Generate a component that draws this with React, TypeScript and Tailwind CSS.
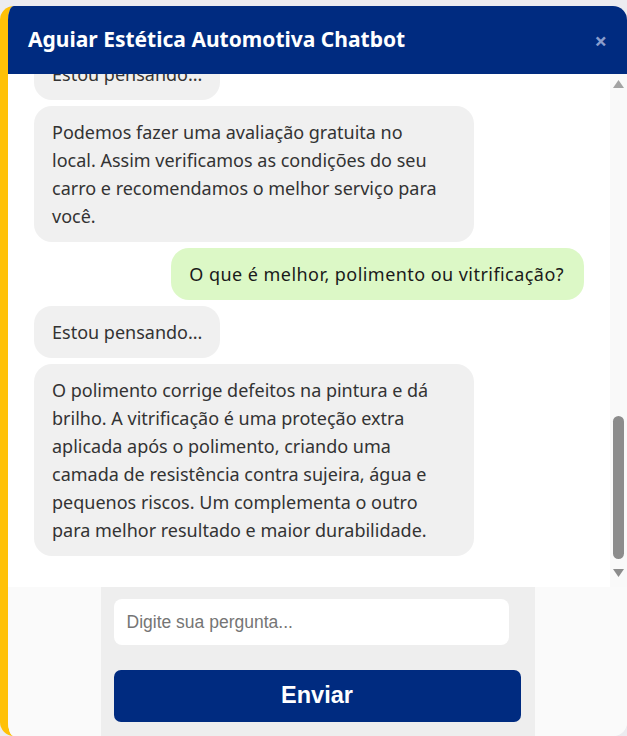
import React from "react";

const font = { fontFamily: '"Noto Sans", "Open Sans", sans-serif' };

function Bot({ children }: { children: React.ReactNode }) {
  return (
    <div className="self-start max-w-[80%] rounded-[18px] bg-[#f0f0f0] px-[18px] py-[12px] text-[18px] leading-[28px] text-[#333333]">
      {children}
    </div>
  );
}

function User({ children }: { children: React.ReactNode }) {
  return (
    <div className="self-end max-w-[80%] rounded-[18px] bg-[#dcf8c6] pl-[18px] pr-[20px] py-[12px] text-[18px] leading-[28px] tracking-[0.45px] text-[#1a1a1a]">
      {children}
    </div>
  );
}

export default function App() {
  return (
    <div className="min-h-screen bg-[#ececf0] pt-[6px]">
      <div
        className="flex h-[730px] flex-col overflow-hidden rounded-[14px] border-l-[8px] border-[#ffc107] bg-[#fafafa]"
        style={font}
      >
        <div className="flex h-[68px] shrink-0 items-center justify-between bg-[#002b80] pl-[20px] pr-[20px]">
          <div className="text-[21px] font-bold text-white">Aguiar Estética Automotiva Chatbot</div>
          <div className="text-[22px] font-bold leading-none text-[#8a9dcc]">×</div>
        </div>
        <div className="flex h-[513px] shrink-0 flex-row bg-white">
          <div className="flex flex-1 flex-col justify-end gap-[6px] overflow-hidden px-[26px] pb-[31px]">
            <Bot>Estou pensando...</Bot>
            <Bot>
              Podemos fazer uma avaliação gratuita no
              <br />
              local. Assim verificamos as condições do seu carro e recomendamos o melhor serviço para você.
            </Bot>
            <User>O que é melhor, polimento ou vitrificação?</User>
            <Bot>Estou pensando...</Bot>
            <Bot>
              O polimento corrige defeitos na pintura e dá brilho. A vitrificação é uma proteção extra aplicada
              após o polimento, criando uma camada de resistência contra sujeira, água e pequenos riscos. Um
              complementa o outro para melhor resultado e maior durabilidade.
            </Bot>
          </div>
          <div className="flex w-[17px] shrink-0 flex-col items-center bg-[#f9f9f9] pb-[10px] pt-[6px]">
            <svg width="11" height="8" viewBox="0 0 11 8" className="shrink-0">
              <polygon points="5.5,0 11,8 0,8" fill="#a3a3a3" />
            </svg>
            <div className="flex-1" />
            <div className="h-[143px] w-[11px] shrink-0 rounded-full bg-[#8c8c8c]" />
            <div className="h-[10px] shrink-0" />
            <svg width="11" height="8" viewBox="0 0 11 8" className="shrink-0">
              <polygon points="0,0 11,0 5.5,8" fill="#8c8c8c" />
            </svg>
          </div>
        </div>
        <div className="flex flex-1 justify-center bg-[#fafafa]">
          <div className="flex w-[434px] flex-col bg-[#eeeeee] pl-[13px] pt-[12px]">
            <div
              className="flex h-[46px] w-[395px] items-center rounded-[8px] bg-white px-[13px] text-[17.5px] text-[#757575]"
              style={{ fontFamily: '"Liberation Sans", Arial, sans-serif' }}
            >
              Digite sua pergunta...
            </div>
            <div
              className="mt-[25px] flex h-[52px] w-[407px] items-center justify-center rounded-[7px] bg-[#002b80] text-[23.5px] font-bold text-white"
              style={{ fontFamily: '"Liberation Sans", Arial, sans-serif' }}
            >
              Enviar
            </div>
          </div>
        </div>
      </div>
    </div>
  );
}
